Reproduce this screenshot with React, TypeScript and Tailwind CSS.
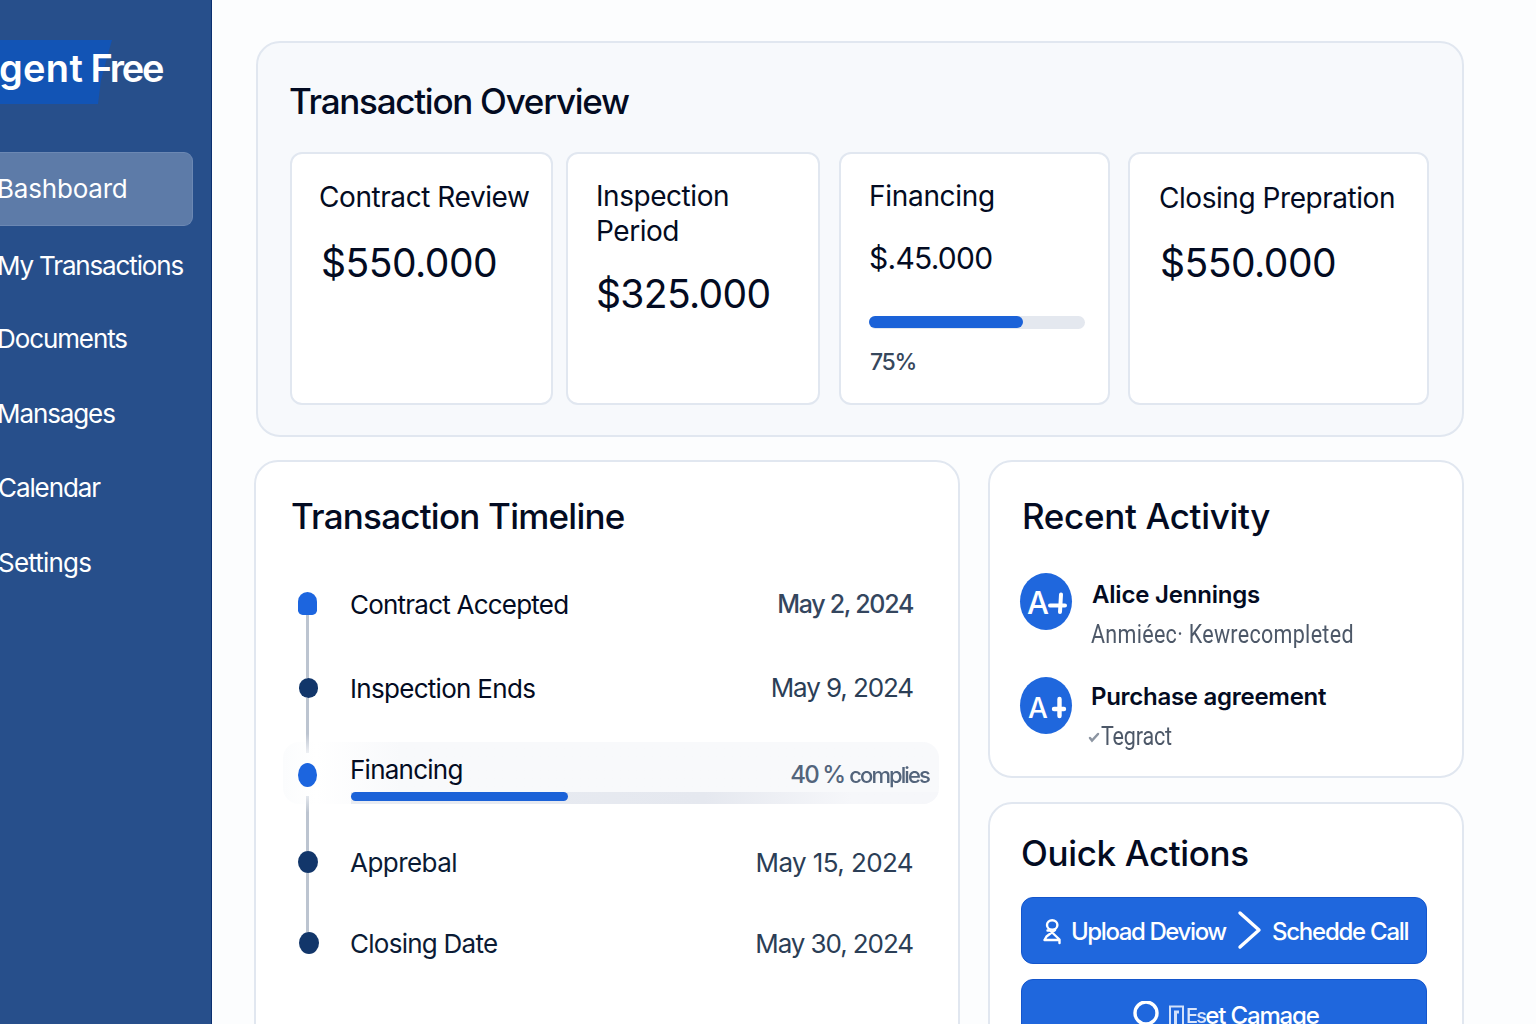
import React from "react";
import clsx from "clsx";

const navItems = [
  { label: "Bashboard", cls: "ml-[-3px] tracking-[-0.2px]", row: "pb-px" },
  { label: "My Transactions", cls: "ml-[-3px] tracking-[-1.15px]", row: "mt-[2px]" },
  { label: "Documents", cls: "ml-[-3px] tracking-[-1.1px]", row: "-mt-px pt-px" },
  { label: "Mansages", cls: "ml-[-3px] tracking-[-1.1px]", row: "mt-px pt-px" },
  { label: "Calendar", cls: "ml-[-2px] tracking-[-1.1px]", row: "" },
  { label: "Settings", cls: "ml-[-2px] tracking-[-0.8px]", row: "mt-px pt-px" },
];

function Sidebar() {
  return (
    <aside className="flex h-full w-[212px] shrink-0 flex-col overflow-hidden border-r border-[#0b2f70] bg-[#274f8b] pt-[40px] text-white">
      <div className="relative flex h-[64px] items-center pb-[9px]">
        <svg className="absolute top-0 left-0" width="114" height="64" viewBox="0 0 114 64">
          <path d="M0 0H112L110 7L101 40L98 64H0Z" fill="#1254b5" />
        </svg>
        <span className="relative -ml-px text-[38px] leading-none font-semibold whitespace-nowrap">
          <span className="tracking-[0.3px]">gent</span>
          <span className="tracking-[-2.2px]"> Free</span>
        </span>
      </div>
      <nav className="mt-[48px] flex flex-col">
        {navItems.map((item, i) => (
          <a
            key={item.label}
            className={clsx(
              "flex h-[74px] items-center text-[26px] whitespace-nowrap",
              item.row,
              i === 0 && "mr-[18px] rounded-r-[9px] border border-l-0 border-[#6c88b3] bg-[#5d7ba8]",
            )}
          >
            <span className={item.cls}>{item.label}</span>
          </a>
        ))}
      </nav>
    </aside>
  );
}

function StageCard({ className, children }: { className: string; children: React.ReactNode }) {
  return (
    <article className={clsx("h-[253px] shrink-0 rounded-[12px] border-2 border-[#e1e7f0] bg-white", className)}>
      {children}
    </article>
  );
}

function Overview() {
  return (
    <section className="h-[396px] w-[1208px] rounded-[24px] border-2 border-[#e1e7f0] bg-[#f7f9fc] px-[32px] text-[#030b22]">
      <h2 className="mt-[36px] -ml-px h-[44px] text-[35px] leading-[44px] font-[450] tracking-[-1.27px] whitespace-nowrap">
        Transaction Overview
      </h2>
      <div className="mt-[29px] flex whitespace-nowrap">
        <StageCard className="w-[263px] pt-[25px] pl-[27px]">
          <h3 className="text-[28px] leading-[36px] tracking-[-0.43px]">Contract Review</h3>
          <p className="mt-[24px] ml-[2px] text-[39px] leading-[48px] tracking-[-0.5px]">$550.000</p>
        </StageCard>
        <StageCard className="ml-[13px] w-[254px] pt-[25px] pl-[28px]">
          <h3 className="text-[28px] leading-[35px] tracking-[-0.45px]">
            Inspection
            <br />
            Period
          </h3>
          <p className="mt-[21px] text-[39px] leading-[48px] tracking-[-0.65px]">$325.000</p>
        </StageCard>
        <StageCard className="ml-[19px] w-[271px] pt-[24px] pl-[28px]">
          <h3 className="text-[28px] leading-[36px] tracking-[-0.3px]">Financing</h3>
          <p className="mt-[25px] text-[30px] leading-[38px] tracking-[-0.75px]">$.45.000</p>
          <div className="mt-[39px] h-[13px] w-[216px] rounded-full bg-[#e4e8ef]">
            <div className="h-[12px] w-[154px] rounded-full bg-[#1b62d8]" />
          </div>
          <p className="mt-[18px] ml-px text-[23px] leading-[30px] font-medium tracking-[-1.3px] text-[#36475c]">75%</p>
        </StageCard>
        <StageCard className="ml-[18px] w-[301px] pt-[26px] pl-[29px]">
          <h3 className="text-[28px] leading-[36px] tracking-[-0.45px]">Closing Prepration</h3>
          <p className="mt-[23px] ml-px text-[39px] leading-[48px] tracking-[-0.5px]">$550.000</p>
        </StageCard>
      </div>
    </section>
  );
}

function TimelineRail() {
  return (
    <div className="relative z-10 mt-[54px] -ml-px flex w-[21px] shrink-0 flex-col items-center">
      <div className="h-[23px] w-[19px] rounded-t-[10px] rounded-b-[5px] bg-[#1c65df]" />
      <div className="h-[63px] w-[3px] bg-[#bcc4d0]" />
      <div className="ml-[2px] h-[20px] w-[19px] rounded-full bg-[#12366a]" />
      <div className="h-[55px] w-[3px] bg-linear-to-b from-[#bcc4d0] from-65% to-[#eef0f4]" />
      <div className="mt-[10px] h-[24px] w-[19px] rounded-[50%] bg-[#1c65df]" />
      <div className="mt-[9px] h-[55px] w-[3px] bg-linear-to-b from-[#e3e7ed] to-[#bcc4d0] to-30%" />
      <div className="ml-px h-[22px] w-[20px] rounded-[50%] bg-[#12366a]" />
      <div className="h-[59px] w-[3px] bg-[#bcc4d0]" />
      <div className="ml-[2px] h-[22px] w-[20px] rounded-[50%] bg-[#12366a]" />
    </div>
  );
}

function Timeline() {
  return (
    <section className="h-[600px] w-[706px] shrink-0 rounded-[24px] border-2 border-[#e1e7f0] bg-white text-[#030b22]">
      <h2 className="mt-[32px] ml-[35px] h-[44px] text-[35px] leading-[44px] font-[450] tracking-[-0.77px] whitespace-nowrap">
        Transaction Timeline
      </h2>
      <div className="flex pl-[42px] whitespace-nowrap">
        <TimelineRail />
        <div className="mt-[24px] flex flex-1 flex-col text-[26px]">
          <div className="flex h-[84px] items-center justify-between pr-[45px] pl-[32px]">
            <span className="tracking-[-0.78px]">Contract Accepted</span>
            <span className="pt-[2px] text-[25px] font-medium tracking-[-1.3px] text-[#34465e]">May 2, 2024</span>
          </div>
          <div className="flex h-[84px] items-center justify-between pr-[45px] pl-[32px]">
            <span className="tracking-[-0.7px]">Inspection Ends</span>
            <span className="pb-px tracking-[-1.1px] text-[#2b3e56]">May 9, 2024</span>
          </div>
          <div className="mt-[12px] mr-[19px] ml-[-35px] flex h-[62px] flex-col overflow-hidden rounded-[16px] bg-linear-to-r from-[#fbfcfd] via-white via-5% to-[#f8f9fb] to-18% pl-[68px]">
            <div className="flex h-[50px] items-center justify-between pr-[10px]">
              <span className="-ml-px pt-[4px] tracking-[-0.75px]">Financing</span>
              <span className="flex items-center gap-[5px] pt-[16px] text-[#53647b]">
                <span className="text-[24px] font-medium tracking-[-1.9px]">40 %</span>
                <span className="text-[22px] font-medium tracking-[-1.9px] blur-[0.6px]">complies</span>
              </span>
            </div>
            <div className="h-[12px] bg-linear-to-r from-[#e9ecf2] via-[#e5e8ef] via-60% to-[#f6f7fa] to-85%">
              <div className="h-[9px] w-[217px] rounded-full bg-[#1b62d8]" />
            </div>
          </div>
          <div className="mt-[16px] flex h-[85px] items-center justify-between pr-[45px] pl-[32px]">
            <span className="tracking-[-0.55px] text-[#0b1b35]">Apprebal</span>
            <span className="tracking-[-0.6px] text-[#2b3e56]">May 15, 2024</span>
          </div>
          <div className="flex h-[77px] items-center justify-between pr-[45px] pl-[32px]">
            <span className="tracking-[-0.74px] text-[#0b1b35]">Closing Date</span>
            <span className="tracking-[-1.09px] text-[#2b3e56]">May 30, 2024</span>
          </div>
        </div>
      </div>
    </section>
  );
}

function Activity() {
  return (
    <section className="h-[318px] w-[476px] rounded-[24px] border-2 border-[#e1e7f0] bg-white pl-[30px] whitespace-nowrap text-[#030b22]">
      <h2 className="mt-[32px] ml-[2px] h-[44px] text-[35px] leading-[44px] font-[450] tracking-[-0.33px]">
        Recent Activity
      </h2>
      <div className="mt-[35px] flex h-[104px]">
        <div className="flex h-[57px] w-[52px] items-center rounded-[50%] bg-[#1f67dd] pt-[2px] pl-[7px] text-white">
          <span className="w-[20px] text-[31px] leading-none font-medium tracking-[-1px]">A</span>
          <svg width="22" height="26" viewBox="0 0 22 26" fill="none" stroke="#fff" strokeWidth="4" strokeLinecap="round">
            <path d="M3 15.5H18M14 4.500L13 22" />
          </svg>
        </div>
        <div className="ml-[20px]">
          <h3 className="pt-px text-[24px] leading-[42px] font-semibold tracking-[-0.2px]">Alice Jennings</h3>
          <p className="-mt-px -ml-px origin-left scale-x-[0.86] font-['Roboto',sans-serif] text-[25px] leading-[40px] tracking-[0.35px] text-[#4d5868]">
            Anmiéec· Kewrecompleted
          </p>
        </div>
      </div>
      <div className="flex">
        <div className="flex h-[57px] w-[52px] items-center rounded-[50%] bg-[#1f67dd] pt-[4px] pl-[8px] text-white">
          <span className="w-[22px] text-[28px] leading-none font-medium">A</span>
          <svg width="18" height="26" viewBox="0 0 18 26" fill="none" stroke="#fff" strokeWidth="4.4" strokeLinecap="round">
            <path d="M4 14H14M9.5 4V21" />
          </svg>
        </div>
        <div className="ml-[19px]">
          <h3 className="text-[24px] leading-[40px] font-semibold tracking-[-0.28px]">Purchase agreement</h3>
          <div className="-ml-[3px] flex items-center">
            <svg width="13" height="16" viewBox="0 0 13 16" fill="none" stroke="#8c95a2" strokeWidth="2.5" strokeLinecap="round">
              <path d="M2 9L4 11.500L10 5" />
            </svg>
            <p className="origin-left scale-x-[0.86] font-['Roboto',sans-serif] text-[25px] leading-[40px] tracking-[-0.2px] text-[#4d5868]">
              Tegract
            </p>
          </div>
        </div>
      </div>
    </section>
  );
}

function QuickActions() {
  return (
    <section className="h-[300px] w-[476px] rounded-[24px] border-2 border-[#e1e7f0] bg-white pl-[31px] whitespace-nowrap">
      <h2 className="mt-[27px] h-[44px] text-[35px] leading-[44px] font-[450] tracking-[-0.35px] text-[#030b22]">
        Ouick Actions
      </h2>
      <button className="mt-[22px] flex h-[67px] w-[406px] items-center rounded-[12px] border border-[#1456cc] bg-[#1f67dd] pl-[20px] text-[24px] font-medium text-white">
        <svg width="20" height="28" viewBox="0 0 20 28" fill="none" stroke="#fff" strokeWidth="2.4" strokeLinecap="round" strokeLinejoin="round">
          <ellipse cx="10.2" cy="8" rx="5.2" ry="4.8" />
          <path d="M5.5 13.500H8L17.500 22.500V26M13 13L4.500 19.500M2.500 23H17.500M4.500 19.500L2.500 23" />
        </svg>
        <span className="ml-[9px] w-[157px] pt-[2px] text-left tracking-[-1.4px]">Upload Deviow</span>
        <svg className="ml-[9px]" width="26" height="42" viewBox="0 0 26 42" fill="none" stroke="#fff" strokeWidth="3.4" strokeLinecap="round" strokeLinejoin="round">
          <path d="M3 3L22 20L3 37" />
        </svg>
        <span className="ml-[9px] pt-[2px] tracking-[-1.25px]">Schedde Call</span>
      </button>
      <button className="mt-[15px] flex h-[72px] w-[406px] items-center rounded-[12px] border border-[#1456cc] bg-[#1f67dd] pl-[110px] text-[24px] font-medium text-white">
        <svg width="28" height="28" viewBox="0 0 28 28" fill="none" stroke="#fff" strokeWidth="3.4">
          <circle cx="14" cy="12" r="11" />
        </svg>
        <svg className="ml-[8px]" width="18" height="26" viewBox="0 0 18 26" fill="none" stroke="#d3e1fa">
          <path d="M2 26V4.500H15V26" strokeWidth="2" />
          <path d="M7.500 26V10H11" strokeWidth="3" />
        </svg>
        <span className="pt-[2px] text-[20px] tracking-[-1.8px] text-[#dbe6fb] blur-[0.5px]">Es</span>
        <span className="pt-[2px] tracking-[-1.15px]">et Camage</span>
      </button>
    </section>
  );
}

export default function App() {
  return (
    <div className="flex h-screen w-screen overflow-hidden bg-[#fcfdfe] font-['Inter','Liberation_Sans',sans-serif]">
      <Sidebar />
      <main className="min-w-0 flex-1 overflow-hidden pt-[41px] pl-[42px]">
        <div className="pl-[2px]">
          <Overview />
        </div>
        <div className="mt-[23px] flex">
          <Timeline />
          <div className="ml-[28px] flex flex-col gap-[24px]">
            <Activity />
            <QuickActions />
          </div>
        </div>
      </main>
    </div>
  );
}
